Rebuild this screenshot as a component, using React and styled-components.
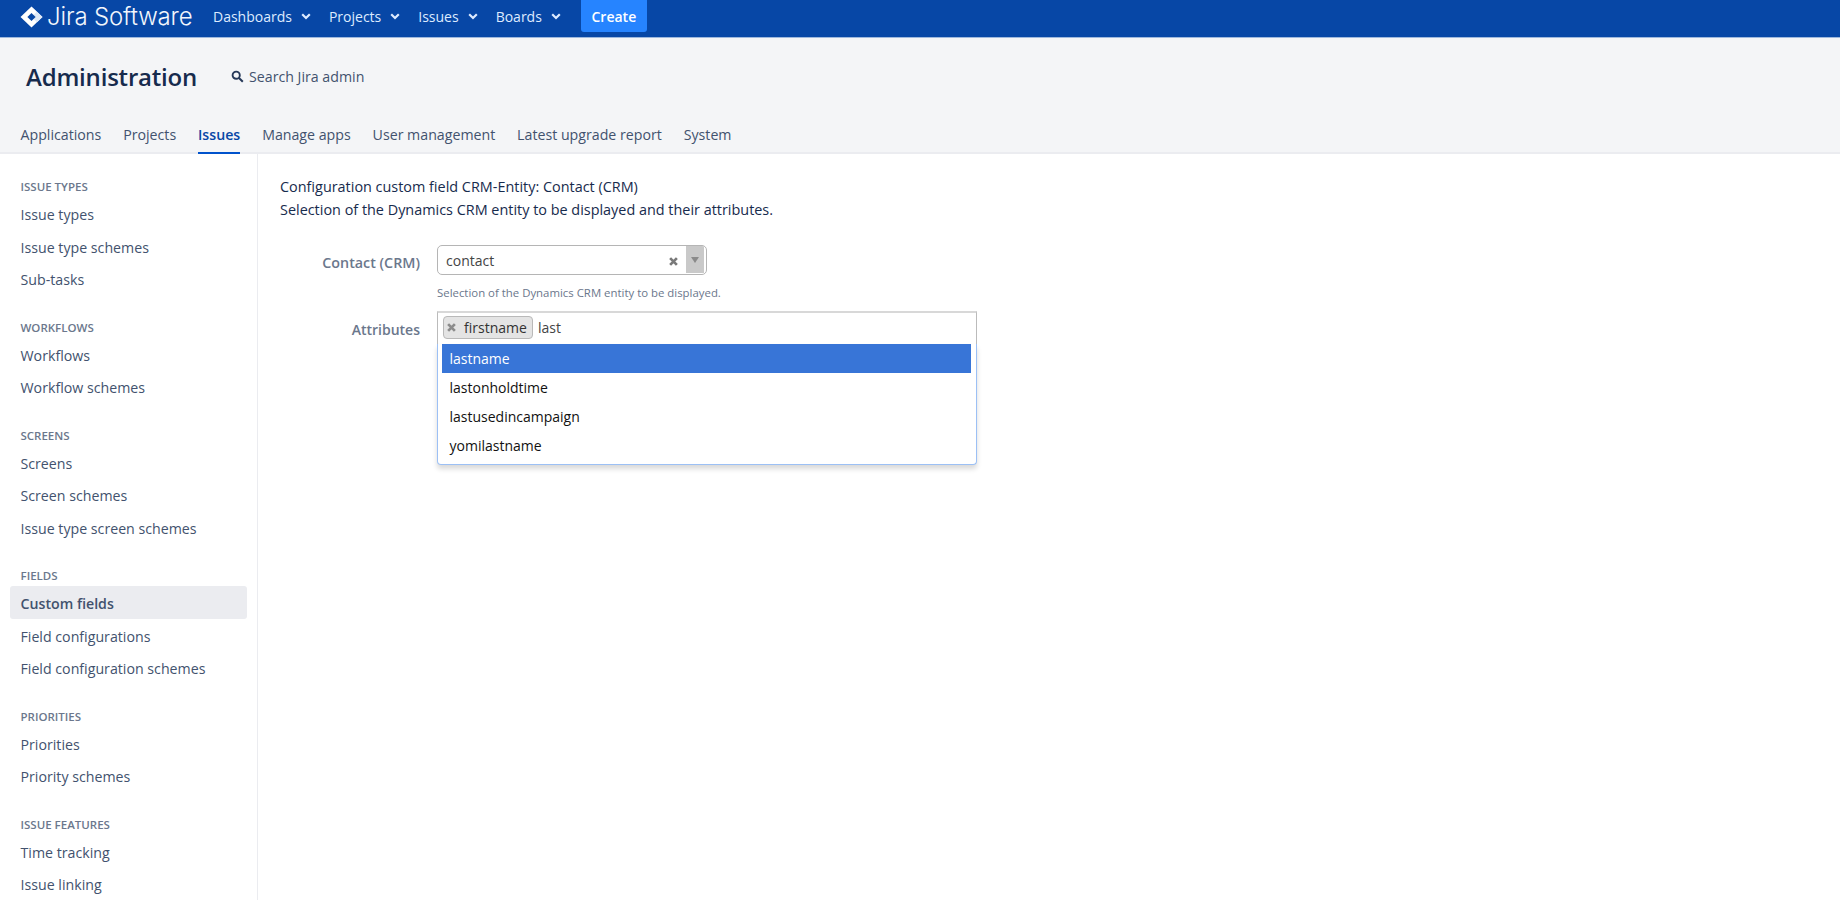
import styled, { createGlobalStyle } from 'styled-components';

const GlobalStyle = createGlobalStyle`
  html, body { margin: 0; padding: 0; height: 100%; background: #fff; }
  body { font-family: "Open Sans", "Noto Sans", "Liberation Sans", sans-serif; font-size: 14px; color: #172b4d; }
  * { box-sizing: border-box; }
`;

const sideGroups = [
  { title: 'Issue types', items: ['Issue types', 'Issue type schemes', 'Sub-tasks'] },
  { title: 'Workflows', items: ['Workflows', 'Workflow schemes'] },
  { title: 'Screens', items: ['Screens', 'Screen schemes', 'Issue type screen schemes'] },
  { title: 'Fields', items: ['Custom fields', 'Field configurations', 'Field configuration schemes'] },
  { title: 'Priorities', items: ['Priorities', 'Priority schemes'] },
  { title: 'Issue features', items: ['Time tracking', 'Issue linking'] },
];

const tabs = ['Applications', 'Projects', 'Issues', 'Manage apps', 'User management', 'Latest upgrade report', 'System'];
const navs = ['Dashboards', 'Projects', 'Issues', 'Boards'];
const options = ['lastname', 'lastonholdtime', 'lastusedincampaign', 'yomilastname'];

const Chevron = () => (
  <svg width="10" height="7" viewBox="0 0 10 7">
    <path d="M1.2 1.2 5 5l3.8-3.8" fill="none" stroke="#deebff" strokeWidth="2.2" />
  </svg>
);

const Logo = () => (
  <svg width="23" height="22" viewBox="0 0 23 22">
    <path d="M11.5 0.5 0.5 11l11 10.5L22.5 11z" fill="#fff" />
    <path d="M11.5 0.5 22.5 11l-5.5 5.2L11.5 11l5-5z" fill="#dfe9f6" />
    <path d="M11.5 7 15.6 11l-4.1 4L7.4 11z" fill="#0747a6" />
  </svg>
);

const Cross = ({ color = '#8c8c8c', size = 8 }) => (
  <svg width={size} height={size} viewBox="0 0 8 8">
    <path d="M1 1l6 6M7 1 1 7" stroke={color} strokeWidth="2.4" />
  </svg>
);

export default function App() {
  return (
    <>
      <GlobalStyle />
      <Page>
        <TopBar>
          <Brand>
            <Logo />
            <BrandName>Jira Software</BrandName>
          </Brand>
          {navs.map((n) => (
            <NavItem key={n}>
              {n}
              <Chevron />
            </NavItem>
          ))}
          <CreateButton>Create</CreateButton>
        </TopBar>

        <AdminHeader>
          <TitleRow>
            <PageTitle>Administration</PageTitle>
            <AdminSearch>
              <svg width="13" height="13" viewBox="0 0 13 13">
                <circle cx="5.2" cy="5.2" r="3.6" fill="none" stroke="#253858" strokeWidth="1.9" />
                <path d="M8 8l3.8 3.8" stroke="#253858" strokeWidth="2" />
              </svg>
              Search Jira admin
            </AdminSearch>
          </TitleRow>
          <Tabs>
            {tabs.map((t) => (
              <Tab key={t} $active={t === 'Issues'}>{t}</Tab>
            ))}
          </Tabs>
        </AdminHeader>

        <Body>
          <Sidebar>
            {sideGroups.map((g) => (
              <SideGroup key={g.title}>
                <SideHeading>{g.title}</SideHeading>
                {g.items.map((i) => (
                  <SideItem key={i} $active={i === 'Custom fields'}>{i}</SideItem>
                ))}
              </SideGroup>
            ))}
          </Sidebar>

          <Main>
            <Intro>
              Configuration custom field CRM-Entity: Contact (CRM)
              <br />
              Selection of the Dynamics CRM entity to be displayed and their attributes.
            </Intro>

            <FieldRow>
              <FieldLabel>Contact (CRM)</FieldLabel>
              <div>
                <SelectBox>
                  <SelectValue>contact</SelectValue>
                  <ClearSlot><Cross size={9} color="#7a7a7a" /></ClearSlot>
                  <SelectArrow>
                    <svg width="8" height="6" viewBox="0 0 8 6"><path d="M0 0h8L4 6z" fill="#8a8a8a" /></svg>
                  </SelectArrow>
                </SelectBox>
                <HelpText>Selection of the Dynamics CRM entity to be displayed.</HelpText>
              </div>
            </FieldRow>

            <AttributesRow>
              <AttributesLabel>Attributes</AttributesLabel>
              <MultiWrap>
                <MultiBox>
                  <Chip>
                    <Cross size={9} color="#8c8c8c" />
                    <ChipText>firstname</ChipText>
                  </Chip>
                  <TypedText>last</TypedText>
                </MultiBox>
                <Dropdown>
                  {options.map((o, i) => (
                    <Option key={o} $active={i === 0}>{o}</Option>
                  ))}
                </Dropdown>
              </MultiWrap>
            </AttributesRow>
          </Main>
        </Body>
      </Page>
    </>
  );
}

const Page = styled.div`
  height: 100vh;
  overflow: hidden;
  display: flex;
  flex-direction: column;
`;

const TopBar = styled.header`
  height: 38px;
  flex: none;
  background: #0747a6;
  border-bottom: 1px solid #9db8dd;
  display: flex;
  align-items: flex-start;
  padding-left: 20px;
`;

const Brand = styled.div`
  display: flex;
  align-items: center;
  gap: 4px;
  height: 33px;
  width: 193px;
  color: #fff;
`;

const BrandName = styled.span`
  font-family: "Inter", "Open Sans", sans-serif;
  font-size: 24px;
  font-weight: 300;
  letter-spacing: -0.15px;
  color: #f2f6fc;
`;

const NavItem = styled.div`
  display: flex;
  align-items: center;
  gap: 9px;
  height: 33px;
  margin-right: 18px;
  color: #deebff;
  font-size: 14px;
`;

const CreateButton = styled.button`
  width: 66px;
  height: 32px;
  margin-left: 2px;
  border: 0;
  border-radius: 0 0 3px 3px;
  background: #2684ff;
  color: #fff;
  font-family: inherit;
  font-size: 14px;
  font-weight: 600;
`;

const AdminHeader = styled.div`
  flex: none;
  height: 116px;
  background: #f4f5f7;
  border-bottom: 2px solid #ebecf0;
  display: flex;
  flex-direction: column;
`;

const TitleRow = styled.div`
  display: flex;
  align-items: center;
  height: 76px;
  margin-bottom: 2px;
  padding-left: 26px;
`;

const PageTitle = styled.h1`
  margin: 0;
  width: 205px;
  font-size: 24px;
  font-weight: 600;
  letter-spacing: -0.2px;
  color: #172b4d;
`;

const AdminSearch = styled.div`
  display: flex;
  align-items: center;
  gap: 5px;
  color: #42526e;
  font-size: 14.2px;
`;

const Tabs = styled.nav`
  display: flex;
  gap: 21.85px;
  padding-left: 20.5px;
  height: 36px;
`;

const Tab = styled.div`
  height: 38px;
  line-height: 38px;
  font-size: 14.2px;
  color: ${(p) => (p.$active ? '#0747a6' : '#42526e')};
  font-weight: ${(p) => (p.$active ? 600 : 400)};
  border-bottom: 2px solid ${(p) => (p.$active ? '#0052cc' : 'transparent')};
`;

const Body = styled.div`
  flex: 1;
  display: flex;
  min-height: 0;
`;

const Sidebar = styled.aside`
  width: 258px;
  flex: none;
  border-right: 1px solid #ebecf0;
  padding: 23px 10px 0;
`;

const SideGroup = styled.section`
  margin-bottom: 23px;
`;

const SideHeading = styled.h3`
  margin: 0;
  height: 20px;
  line-height: 20px;
  padding-left: 10.5px;
  font-size: 11.5px;
  font-weight: 600;
  text-transform: uppercase;
  color: #6b778c;
`;

const SideItem = styled.div`
  height: 32.5px;
  line-height: 35px;
  padding-left: 10.5px;
  border-radius: 3px;
  font-size: 14.2px;
  color: #42526e;
  background: ${(p) => (p.$active ? '#ebecf0' : 'transparent')};
  font-weight: ${(p) => (p.$active ? 600 : 400)};
`;

const Main = styled.main`
  flex: 1;
  padding: 22px 0 0 22px;
`;

const Intro = styled.p`
  margin: 0 0 24px;
  line-height: 22.5px;
  font-size: 14.42px;
  color: #172b4d;
`;

const FieldRow = styled.div`
  display: flex;
  align-items: flex-start;
`;

const AttributesRow = styled(FieldRow)`
  margin-top: 9px;
`;

const FieldLabel = styled.label`
  width: 140px;
  margin-right: 17px;
  text-align: right;
  font-size: 14.3px;
  font-weight: 600;
  color: #6b778c;
  line-height: 36px;
`;

const AttributesLabel = styled(FieldLabel)`
  line-height: 38px;
  font-size: 14px;
`;

const SelectBox = styled.div`
  width: 270px;
  height: 30px;
  display: flex;
  align-items: stretch;
  border: 1px solid #b5b5b5;
  border-radius: 5px;
  overflow: hidden;
  background: #fff;
  padding-right: 2px;
`;

const SelectValue = styled.span`
  flex: 1;
  padding-left: 8px;
  line-height: 30px;
  color: #444;
`;

const ClearSlot = styled.span`
  width: 25px;
  display: flex;
  align-items: center;
  justify-content: center;
  padding-top: 2px;
`;

const SelectArrow = styled.span`
  width: 18px;
  margin-bottom: 1px;
  background: #c9c9c9;
  display: flex;
  justify-content: center;
  padding-top: 11px;
`;

const HelpText = styled.div`
  margin-top: 8px;
  height: 19px;
  line-height: 19px;
  font-size: 11.4px;
  color: #6b778c;
`;

const MultiWrap = styled.div`
  position: relative;
  width: 540px;
`;

const MultiBox = styled.div`
  height: 33px;
  display: flex;
  align-items: flex-start;
  padding: 3px 0 0 5px;
  border: 1px solid #bbb;
  border-top: 2px solid #d8d8d8;
  border-bottom: 0;
  background: #fff;
`;

const Chip = styled.div`
  display: flex;
  align-items: center;
  height: 23px;
  width: 90px;
  padding-left: 3px;
  border: 1px solid #b9b9b9;
  border-radius: 4px;
  background: #e4e4e4;
`;

const ChipText = styled.span`
  margin-left: 8px;
  color: #333;
`;

const TypedText = styled.span`
  margin-left: 5px;
  line-height: 23px;
  color: #444;
`;

const Dropdown = styled.ul`
  position: absolute;
  left: 0;
  right: 0;
  top: 33px;
  margin: 0;
  padding: 0 5px 4px 4px;
  list-style: none;
  height: 121px;
  background: #fff;
  border: 1px solid #9cc0f5;
  border-top: 0;
  border-radius: 0 0 4px 4px;
  box-shadow: 0 4px 5px rgba(0, 0, 0, 0.15);
`;

const Option = styled.li`
  height: 29px;
  line-height: 29px;
  padding-left: 7.5px;
  color: ${(p) => (p.$active ? '#fff' : '#111')};
  background: ${(p) => (p.$active ? '#3875d7' : 'transparent')};
`;
